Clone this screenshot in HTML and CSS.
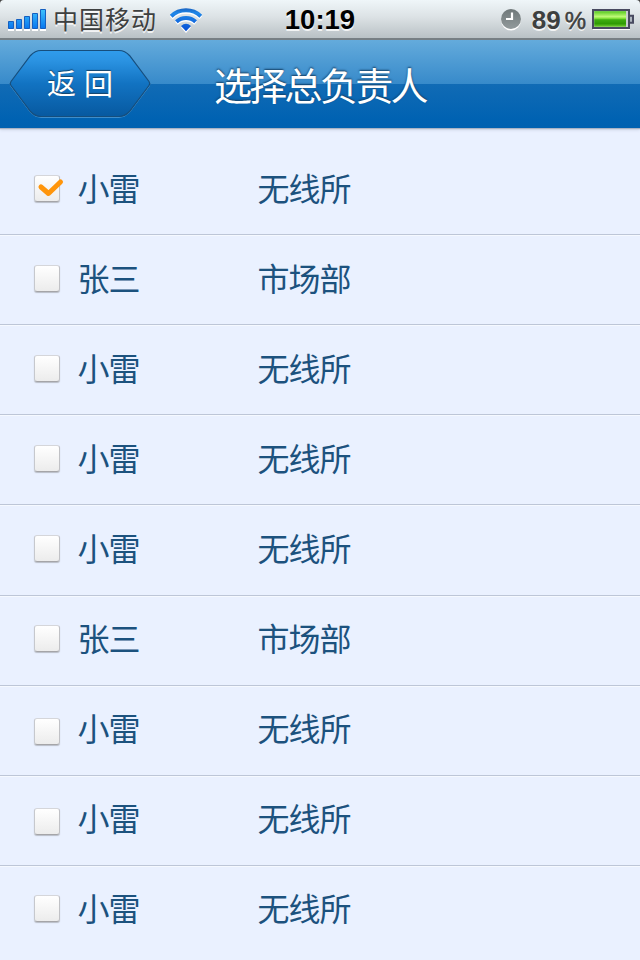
FILE: index.html
```html
<!DOCTYPE html>
<html lang="zh-CN">
<head>
<meta charset="utf-8">
<title>选择总负责人</title>
<link rel="stylesheet" href="styles.css">
</head>
<body>
<div class="status">
  <svg class="signal" width="40" height="24" viewBox="0 0 40 24">
    <defs><linearGradient id="sig" gradientUnits="userSpaceOnUse" x1="0" y1="1" x2="0" y2="21"><stop offset="0" stop-color="#3fc4fd"/><stop offset="1" stop-color="#0674ee"/></linearGradient></defs>
    <path fill="#fff" d="M0 21h6v2H0zM8 21h6v2H8zM16 21h6v2h-6zM24 21h6v2h-6zM32 21h6v2h-6z"/>
    <g fill="url(#sig)" stroke="#155fc0"><path d="M.5 13.500h5v7h-5zM8.500 11.500h5v9h-5zM16.500 8.500h5v12h-5zM24.500 5.500h5v15h-5zM32.500 1.500h5v19h-5z"/></g>
  </svg>
  <span class="carrier">中国移动</span>
  <svg class="wifi" width="34" height="26" viewBox="0 0 34 26">
    <defs><linearGradient id="wf" gradientUnits="userSpaceOnUse" x1="0" y1="0" x2="0" y2="24"><stop offset="0" stop-color="#1759b8"/><stop offset=".25" stop-color="#2188e8"/><stop offset="1" stop-color="#064fd5"/></linearGradient></defs>
    <g fill="none" stroke="#fff" stroke-width="4" transform="translate(0 1.500)"><path d="M2.200 9.200A21.500 21.500 0 0 1 31.800 9.200M7.400 14.800A14 14 0 0 1 26.600 14.800"/></g>
    <g fill="none" stroke="url(#wf)" stroke-width="4"><path d="M2.200 9.200A21.500 21.500 0 0 1 31.800 9.200M7.400 14.800A14 14 0 0 1 26.600 14.800"/></g>
    <path fill="#fff" d="M12 20.500Q17 15.500 22 20.500L17 26z"/>
    <path fill="url(#wf)" d="M12 19Q17 14.500 22 19L17 24.300z"/>
  </svg>
  <span class="time">10:19</span>
  <div class="right">
    <svg class="clock" width="22" height="24" viewBox="0 0 22 24">
      <defs><linearGradient id="ck" x1="0" y1="0" x2="0" y2="1"><stop offset="0" stop-color="#6f7879"/><stop offset="1" stop-color="#929a9c"/></linearGradient></defs>
      <circle cx="11" cy="12.500" r="10" fill="#fff"/><circle cx="11" cy="11" r="10" fill="url(#ck)"/>
      <path d="M12 4.500V11H6" fill="none" stroke="#fff" stroke-width="2.200"/>
    </svg>
    <span class="pct">89<i>%</i></span>
    <svg class="battery" width="43" height="24" viewBox="0 0 43 24">
      <defs><linearGradient id="bt" x1="0" y1="0" x2="0" y2="1"><stop offset="0" stop-color="#55c91e"/><stop offset=".35" stop-color="#c0fa78"/><stop offset=".46" stop-color="#86e43c"/><stop offset=".55" stop-color="#3fae10"/><stop offset=".8" stop-color="#2e9a04"/><stop offset="1" stop-color="#72cf30"/></linearGradient></defs>
      <path d="M1 22h37v1H1z" fill="#fff"/>
      <path d="M1 3h36v18H1z" fill="#c9cdd2" stroke="#484a60" stroke-width="2"/>
      <path d="M2.200 4.200H34v15.600H2.200z" fill="url(#bt)"/>
      <path d="M38 8.700h3v7h-3" fill="#aeb6bf" stroke="#484a60" stroke-width="2"/>
    </svg>
  </div>
  <svg class="corners" width="640" height="4" viewBox="0 0 640 4"><path d="M0 0h4Q0 0 0 4zM640 0h-4q4 0 4 4z" fill="#444"/></svg>
</div>
<header class="nav">
  <a class="back">
    <svg class="back-shape" width="144" height="72" viewBox="0 0 144 72">
      <defs><linearGradient id="bk" x1="0" y1="0" x2="0" y2="1"><stop offset="0" stop-color="#309cec"/><stop offset=".15" stop-color="#2b93e2"/><stop offset=".5" stop-color="#1273c2"/><stop offset="1" stop-color="#0759a0"/></linearGradient></defs>
      <path transform="translate(0 1)" d="M33 1.500H111Q117 1.500 121.500 6.500L141 32.500Q142.500 34.500 141 36.500L121.500 62.500Q117 67.500 111 67.500H33Q27 67.500 22.500 62.500L3 36.500Q1.500 34.500 3 32.500L22.500 6.500Q27 1.500 33 1.500Z" fill="none" stroke="#8cc4e9" stroke-opacity=".45"/>
      <path d="M33 1.500H111Q117 1.500 121.500 6.500L141 32.500Q142.500 34.500 141 36.500L121.500 62.500Q117 67.500 111 67.500H33Q27 67.500 22.500 62.500L3 36.500Q1.500 34.500 3 32.500L22.500 6.500Q27 1.500 33 1.500Z" fill="url(#bk)" stroke="#164e7d" stroke-width="1.200"/>
    </svg>
    <span class="back-text">返回</span>
  </a>
  <h1 class="title">选择总负责人</h1>
</header>
<ul class="list">
  <li class="row"><span class="box"><svg class="tick" width="28" height="20" viewBox="0 0 28 20"><path d="M4 10L11.500 16.500L23.500 5" fill="none" stroke="#ff950a" stroke-width="5" stroke-linejoin="round" stroke-linecap="round"/></svg></span><span class="name">小雷</span><span class="dept">无线所</span></li>
  <li class="row"><span class="box"></span><span class="name">张三</span><span class="dept">市场部</span></li>
  <li class="row"><span class="box"></span><span class="name">小雷</span><span class="dept">无线所</span></li>
  <li class="row"><span class="box"></span><span class="name">小雷</span><span class="dept">无线所</span></li>
  <li class="row tall"><span class="box"></span><span class="name">小雷</span><span class="dept">无线所</span></li>
  <li class="row late"><span class="box"></span><span class="name">张三</span><span class="dept">市场部</span></li>
  <li class="row late low"><span class="box"></span><span class="name">小雷</span><span class="dept">无线所</span></li>
  <li class="row late low"><span class="box"></span><span class="name">小雷</span><span class="dept">无线所</span></li>
  <li class="row late last"><span class="box"></span><span class="name">小雷</span><span class="dept">无线所</span></li>
</ul>
</body>
</html>
```
FILE: styles.css
```css
* { box-sizing: border-box; }
body {
  margin: 0;
  width: 640px;
  height: 960px;
  overflow: hidden;
  background: #eaf1ff;
  font-family: "Noto Sans", "Noto Sans CJK SC", sans-serif;
}
.status {
  position: relative;
  display: flex;
  align-items: flex-start;
  height: 40px;
  padding: 8px 5px 0 8px;
  background: linear-gradient(#eff6f9, #dce2e5 45%, #b9c1c5);
  border-bottom: 2px solid #777f84;
  color: #3e4040;
  text-shadow: 0 2px 0 rgba(255, 255, 255, .8);
}
.corners { position: absolute; left: 0; top: 0; }
.carrier {
  margin: -2px 0 0 5px;
  font: 400 25px/24px "Noto Sans CJK SC", sans-serif;
  letter-spacing: 1px;
}
.wifi { margin: -1px 0 0 12px; }
.time {
  position: absolute;
  left: 0;
  right: 0;
  top: 4px;
  text-align: center;
  color: #000;
  font: 700 27.500px/32px "Liberation Sans", sans-serif;
}
.right { display: flex; margin-left: auto; }
.pct {
  margin: -4px 6px 0 10px;
  font: 700 26px/32px "Liberation Sans", sans-serif;
}
.pct i {
  margin-left: 4px;
  font-style: normal;
  font-weight: 400;
  font-size: 24px;
  -webkit-text-stroke: .5px #3e4040;
}
.battery { margin-top: -1px; }
.nav {
  display: flex;
  align-items: flex-start;
  height: 88px;
  padding-left: 8px;
  background: linear-gradient(#64abdc 0, #378aca 44px, #116bb5 44px, #0062b2 80px, #0061b0);
  box-shadow: 0 1px 1px #a9b3c5, 0 2px 3px #ccd5e5;
}
.back { position: relative; display: block; width: 144px; height: 72px; margin-top: 9px; }
.back-shape { display: block; }
.back-text {
  position: absolute;
  left: 39px;
  top: 15px;
  color: #fff;
  font-size: 29px;
  line-height: 40px;
  letter-spacing: 8px;
  text-shadow: 0 -1px 1px #17456b;
}
.title {
  margin: 16px 0 0 62px;
  color: #fff;
  font-size: 38px;
  font-weight: 400;
  line-height: 58px;
  letter-spacing: -2.700px;
  text-shadow: 0 -1px 2px #143e63;
}
.list { margin: 17px 0 0; padding: 0; list-style: none; }
.row {
  display: flex;
  align-items: flex-start;
  height: 90px;
  padding: 21px 0 0 34px;
  border-bottom: 1px solid #bdc6d7;
  box-shadow: 0 1px 0 #f5f9ff;
  color: #1c527e;
  font-size: 32px;
  line-height: 46px;
  letter-spacing: -1px;
}
.tall { height: 91px; }
.late { padding-top: 20px; }
.last { border: 0; box-shadow: none; }
.box {
  position: relative;
  flex: none;
  width: 26px;
  height: 27px;
  margin-top: 9px;
  border: 1px solid #c6c8cd;
  border-color: #d5d6da #c0c1c5 #a5a5a8 #c6c8cd;
  border-radius: 3px;
  background: linear-gradient(#fff, #ececec);
  box-shadow: 0 1px 1px #b9bdc7;
}
.low .box { margin-top: 12px; }
.tick { position: absolute; left: 2px; top: 1px; }
.name { width: 180px; margin-left: 17.500px; }
```
